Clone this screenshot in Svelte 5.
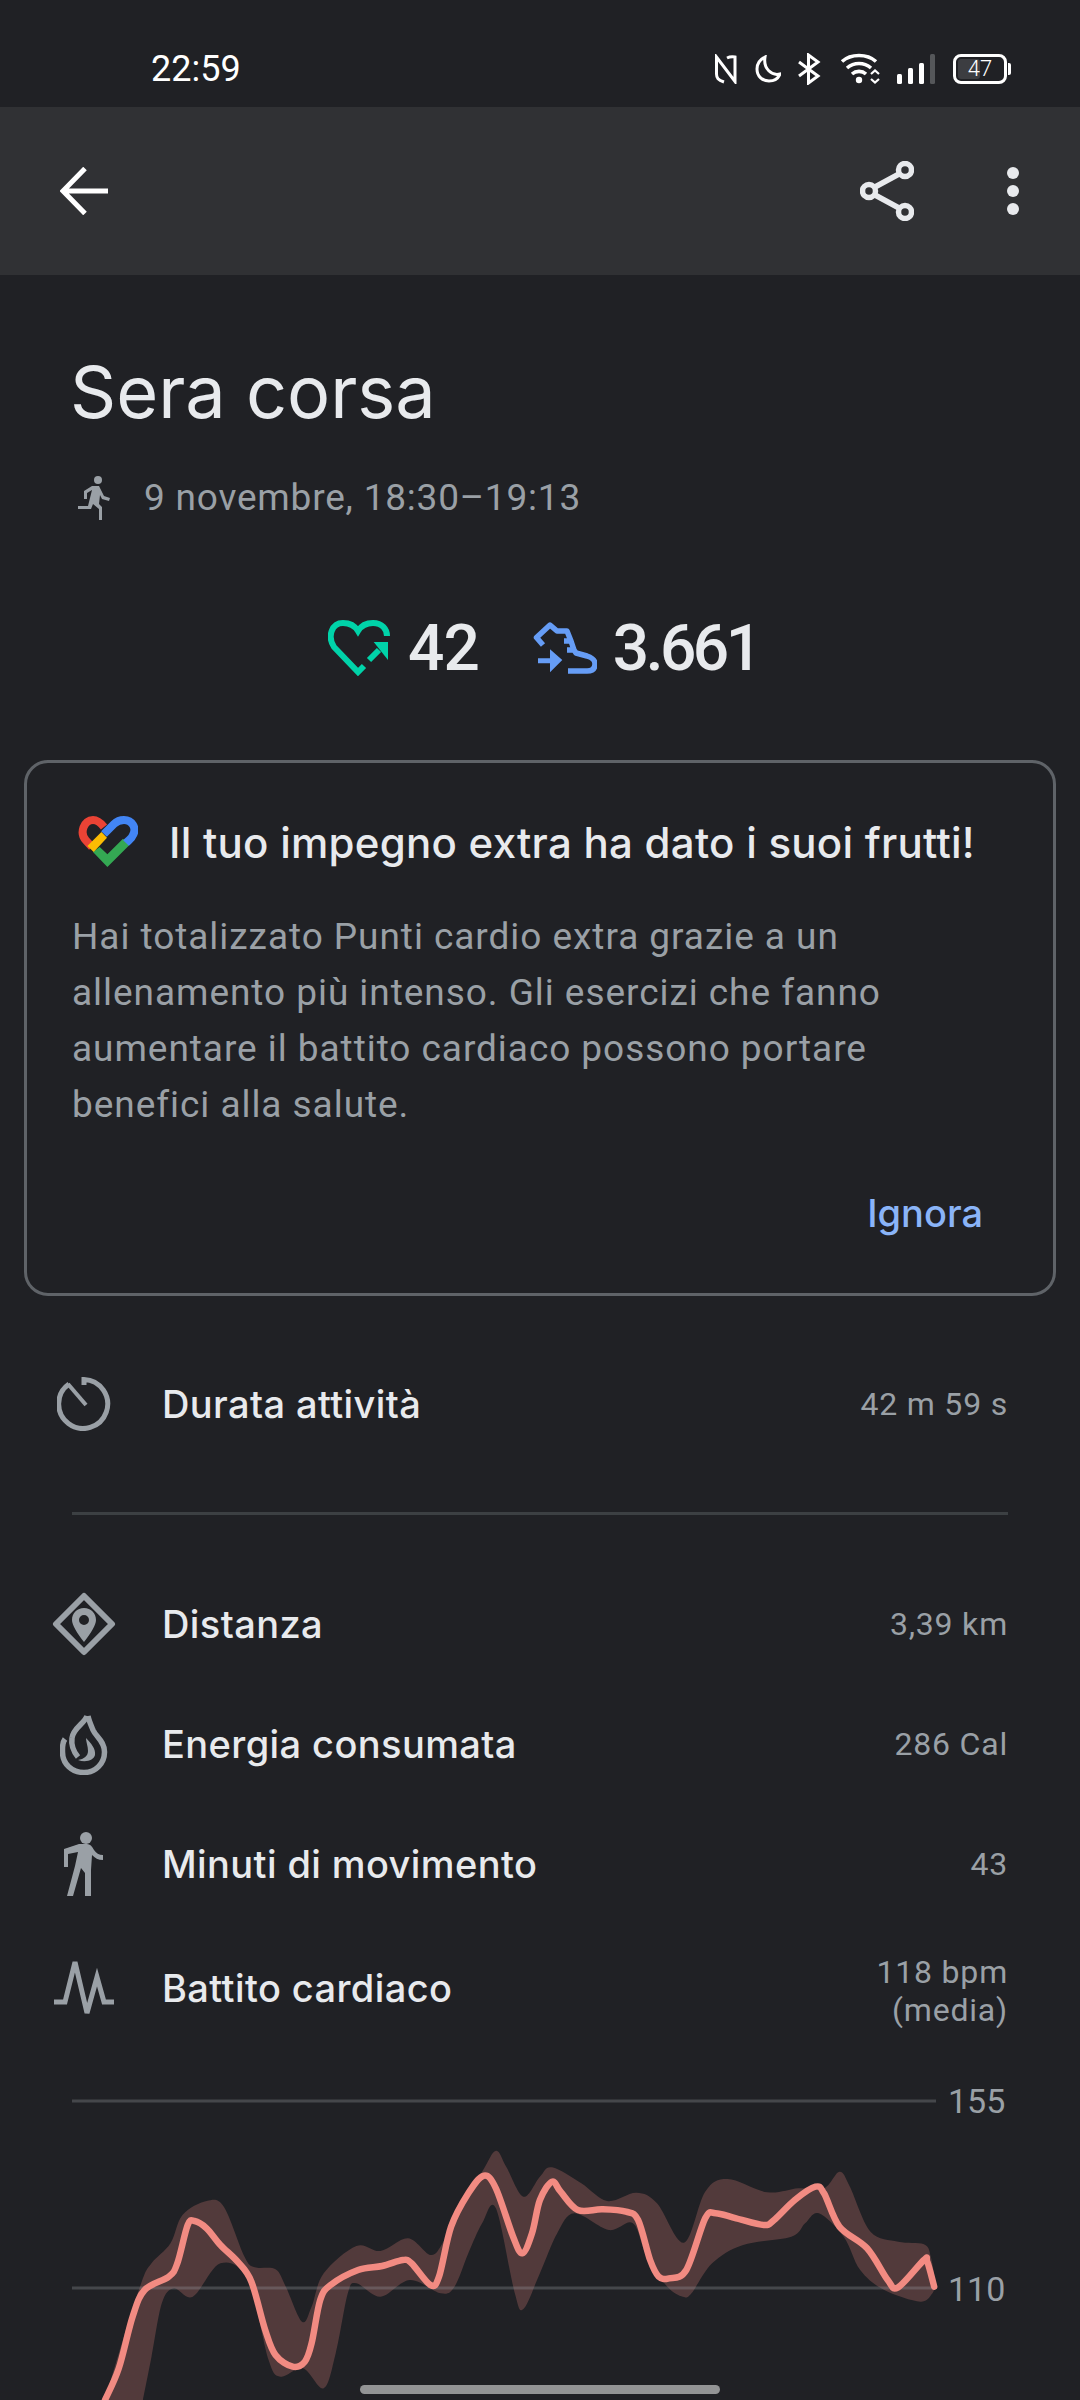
<script>
  // chart points are read off the reference: x in 1/2.904 px, y in 1/3 px, from y=2060
  const topLine = [[305,1020],[345,925],[385,770],[420,690],[490,650],[515,610],[545,495],[565,483],[600,505],[640,555],[690,605],[730,665],[770,810],[800,885],[850,920],[885,905],[905,850],[930,720],[960,675],[1040,630],[1110,618],[1170,600],[1195,610],[1250,675],[1275,650],[1310,500],[1360,400],[1405,347],[1440,385],[1490,530],[1517,580],[1545,520],[1568,420],[1603,365],[1628,395],[1678,450],[1748,448],[1818,455],[1853,480],[1888,600],[1913,650],[1943,655],[1993,630],[2048,475],[2078,460],[2138,475],[2218,495],[2248,480],[2308,420],[2368,380],[2393,400],[2438,500],[2518,565],[2578,660],[2608,682],[2683,600],[2693,605],[2713,680]];
  const bandTop = [[305,1020],[345,880],[410,670],[440,610],[495,550],[530,465],[600,423],[650,440],[710,590],[740,622],[800,628],[830,680],[877,785],[905,740],[940,640],[1035,558],[1105,573],[1185,535],[1250,585],[1285,550],[1320,470],[1400,335],[1440,272],[1470,320],[1520,410],[1568,350],[1603,322],[1688,370],[1763,423],[1848,398],[1908,430],[1986,548],[2048,395],[2113,357],[2228,397],[2318,385],[2393,385],[2438,335],[2468,380],[2528,515],[2608,545],[2683,553],[2703,590],[2718,680]];
  const bandBottom = [[2708,700],[2673,725],[2568,690],[2498,630],[2450,530],[2378,460],[2338,490],[2298,530],[2158,555],[2068,610],[2008,700],[1983,710],[1938,680],[1878,590],[1838,490],[1768,510],[1668,460],[1618,520],[1568,640],[1520,747],[1495,700],[1440,445],[1400,490],[1360,580],[1320,680],[1280,700],[1190,660],[1105,710],[1035,670],[1010,700],[975,880],[940,985],[880,925],[815,950],[780,900],[720,660],[640,610],[560,710],[505,685],[470,730],[440,890],[415,1020]];

  const toPx = (pts) => pts.map(([x, y]) => [x / 2.904, y / 3]);

  // catmull-rom through the points, as cubic segments
  function smooth(pts, start = true) {
    let d = start ? `M${pts[0][0].toFixed(1)} ${pts[0][1].toFixed(1)}` : `L${pts[0][0].toFixed(1)} ${pts[0][1].toFixed(1)}`;
    for (let i = 0; i < pts.length - 1; i++) {
      const p0 = pts[i - 1] || pts[i];
      const p1 = pts[i];
      const p2 = pts[i + 1];
      const p3 = pts[i + 2] || p2;
      const c1x = p1[0] + (p2[0] - p0[0]) / 6;
      const c1y = p1[1] + (p2[1] - p0[1]) / 6;
      const c2x = p2[0] - (p3[0] - p1[0]) / 6;
      const c2y = p2[1] - (p3[1] - p1[1]) / 6;
      d += `C${c1x.toFixed(1)} ${c1y.toFixed(1)} ${c2x.toFixed(1)} ${c2y.toFixed(1)} ${p2[0].toFixed(1)} ${p2[1].toFixed(1)}`;
    }
    return d;
  }

  const linePath = smooth(toPx(topLine));
  const bandPath = smooth(toPx(bandTop)) + smooth(toPx(bandBottom), false) + "Z";

  const paragraph = [
    "Hai totalizzato Punti cardio extra grazie a un",
    "allenamento più intenso. Gli esercizi che fanno",
    "aumentare il battito cardiaco possono portare",
    "benefici alla salute.",
  ];
</script>

<div class="page">
  <header class="status">
    <span class="time">22:59</span>
    <div class="status-icons">
      <svg width="24" height="30" viewBox="0 0 24 30" fill="none" stroke="#fff" stroke-width="3">
        <path d="M10 28C4 26 2.500 24 2.500 20V3L21 27.500V3C18 2.500 15 3 13 4" />
      </svg>
      <svg class="gap-moon" width="26" height="28" viewBox="0 0 26 28" fill="none" stroke="#fff" stroke-width="3">
        <path d="M10 2C4 5 2 9 2 14C2 21 7 26 14 26C19 26 23 24 25 19C17 21 8 14 10 2Z" />
      </svg>
      <svg class="gap-bt" width="24" height="32" viewBox="0 0 24 32" fill="none" stroke="#fff" stroke-width="3">
        <path d="M2 9L21 23L11.500 30V2L21 9L2 23" />
      </svg>
      <svg class="gap-wifi" width="42" height="32" viewBox="0 0 42 32">
        <path d="M2 8.500C11 .5 27 .5 36 8.500M7 15C14 9 24 9 31 15M12 21C16 17.500 22 17.500 26 21" fill="none" stroke="#fff" stroke-width="3.600" />
        <circle cx="19" cy="27" r="3.200" fill="#fff" />
        <path d="M31 21L35 17.500L39 21M31 26L35 29.500L39 26" fill="none" stroke="#fff" stroke-width="2.200" />
      </svg>
      <svg class="gap-signal" width="38" height="30" viewBox="0 0 38 30">
        <rect x="0" y="20" width="5" height="10" rx="1.500" fill="#fff" />
        <rect x="11" y="14" width="5" height="16" rx="1.500" fill="#fff" />
        <rect x="22" y="9" width="5" height="21" rx="1.500" fill="#fff" />
        <rect x="33" y="0" width="5" height="30" rx="1.500" fill="#55575a" />
      </svg>
      <div class="battery">
        <div class="battery-body"><span class="battery-fill"></span><span class="battery-num">47</span></div>
        <span class="battery-tip"></span>
      </div>
    </div>
  </header>

  <div class="toolbar">
    <svg width="48" height="48" viewBox="0 0 48 48" fill="none" stroke="#fff" stroke-width="5">
      <path d="M25 1.500L3 24L25 46.500M3 24H48" />
    </svg>
    <div class="toolbar-right">
      <svg width="54" height="60" viewBox="0 0 54 60" fill="none" stroke="#e8eaed" stroke-width="5.500">
        <circle cx="9" cy="30" r="6.500" />
        <circle cx="45" cy="9" r="6.500" />
        <circle cx="45" cy="51" r="6.500" />
        <path d="M15 26L39 13M15 34L39 47" />
      </svg>
      <svg width="14" height="48" viewBox="0 0 14 48" fill="#e8eaed">
        <circle cx="7" cy="6" r="6" />
        <circle cx="7" cy="24" r="6" />
        <circle cx="7" cy="42" r="6" />
      </svg>
    </div>
  </div>

  <section class="heading">
    <h1>Sera corsa</h1>
    <div class="when">
      <svg width="32" height="44" viewBox="0 0 32 44" fill="#9aa0a6">
        <circle cx="20" cy="4" r="4" />
        <path d="M14 10L21 10L26 20L32 22L31 25L24 23L22 19L21 28L24 31V44H21V33L15 28L13 33H0V30H10L14 14L9 17V23H6V15Z" />
      </svg>
      <span>9 novembre, 18:30–19:13</span>
    </div>
  </section>

  <div class="stats">
    <svg width="62" height="56" viewBox="0 0 62 56" fill="none" stroke="#00d3a9" stroke-width="6">
      <path d="M36 46L30 52L6 27C-1 16 4 3 15 3C22 3 27 6 30 11C33 6 38 3 45 3C54 3 59 9 59 16" />
      <path d="M41 40L51 30" />
      <path d="M45.700 22H60V40Z" fill="#00d3a9" stroke="none" />
    </svg>
    <span class="stat-num first">42</span>
    <svg class="shoe" width="64" height="52" viewBox="0 0 64 52" fill="none" stroke="#669df6" stroke-width="5.500" stroke-linejoin="round">
      <path d="M10 23L3.500 15.500L17 3L24 9H34L38 19H31M38 19L41 28H34M41 28L43 31L54 34C60 36 62 38 62 42C62 47 59 49 54 49H35" />
      <path d="M5 36.300H17V27.300L29.300 38L17 50.300V41.300H5Z" fill="#669df6" stroke="none" />
    </svg>
    <span class="stat-num second">3.661</span>
  </div>

  <div class="card">
    <div class="card-title">
      <svg width="60" height="54" viewBox="0 0 60 54" fill="none" stroke-width="8">
        <path d="M14 31L8 24.500C1 17 6 4 15 4C19 4 22 6 26 11" stroke="#ea4335" />
        <path d="M15 36L29.400 51L51.700 28.700L45 22.700L29.400 38.300L21.700 31Z" fill="#34a853" stroke="none" />
        <path d="M26 18L36 8C40 4 44 4 46 4C54 4 59 12 55 19C54 22 52 23 48 27" stroke="#4285f4" />
        <path d="M9.400 30L23.400 16L29 21.700L15.700 36Z" fill="#fbbc04" stroke="none" />
      </svg>
      <span>Il tuo impegno extra ha dato i suoi frutti!</span>
    </div>
    <p class="card-text">
      {#each paragraph as line}
        <span>{line}</span>
      {/each}
    </p>
    <div class="card-action">Ignora</div>
  </div>

  <div class="rows">
    <div class="row first-row">
      <div class="row-icon">
        <svg width="54" height="54" viewBox="0 0 54 54" fill="none" stroke="#9aa0a6" stroke-width="5">
          <path d="M12 7A24.500 24.500 0 1 0 27 2.500V8" />
          <path d="M11 7L29 28" stroke-width="4" />
        </svg>
      </div>
      <span class="row-label">Durata attività</span>
      <span class="row-value">42 m 59 s</span>
    </div>
    <div class="divider"></div>
    <div class="row dist">
      <div class="row-icon">
        <svg width="64" height="64" viewBox="0 0 64 64">
          <path d="M32 4L60 32L32 60L4 32Z" fill="none" stroke="#9aa0a6" stroke-width="6" stroke-linejoin="round" />
          <path fill-rule="evenodd" d="M32 16C25 16 20 21 20 28C20 33 25 41 32 50C39 41 44 33 44 28C44 21 39 16 32 16ZM32 23A5 5 0 1 1 32 33A5 5 0 1 1 32 23Z" fill="#9aa0a6" />
        </svg>
      </div>
      <span class="row-label">Distanza</span>
      <span class="row-value">3,39 km</span>
    </div>
    <div class="row">
      <div class="row-icon">
        <svg width="48" height="62" viewBox="0 0 48 62" fill="none" stroke="#9aa0a6" stroke-width="5.500">
          <path d="M27 3C25 10 13 15 12 25C11 32 13 38 18 44" />
          <path d="M5 26C2 30 2.500 34 2.500 39C2.500 51 12 59.500 24 59.500C36 59.500 44.500 50 44.500 39C44.500 28 36 24 33 17C31 12 29 8 28 3" />
          <path d="M26 25C31 30 36 36 35 42C34 47 26 50 18 47C24 46 28 43 28 38C28 33 26 29 26 25Z" fill="#9aa0a6" stroke="none" />
        </svg>
      </div>
      <span class="row-label">Energia consumata</span>
      <span class="row-value">286 Cal</span>
    </div>
    <div class="row">
      <div class="row-icon">
        <svg width="40" height="64" viewBox="0 0 40 64" fill="#9aa0a6">
          <circle cx="22" cy="6" r="6" />
          <path d="M0 17L15 12H23C26 12 28 14 30 18C32 21 35 23 39 23V28C34 28 31 26 28 23L27 38V64H21V41L17 36L9 64H3L11 34L14 20L4 22V35H0Z" />
        </svg>
      </div>
      <span class="row-label">Minuti di movimento</span>
      <span class="row-value">43</span>
    </div>
    <div class="row tall">
      <div class="row-icon">
        <svg width="60" height="58" viewBox="0 0 60 58" fill="none" stroke="#9aa0a6" stroke-width="5">
          <path d="M0 43H11L21 3L33 54L43 18L50 43H60" />
        </svg>
      </div>
      <span class="row-label">Battito cardiaco</span>
      <span class="row-value">118 bpm<br />(media)</span>
    </div>
  </div>

  <svg class="chart" width="1080" height="340" viewBox="0 0 1080 340">
    <path d={bandPath} fill="#f28b82" fill-opacity="0.24" />
    <path d="M72 41H936M72 228H936" stroke="#9aa0a6" stroke-opacity="0.3" stroke-width="3" />
    <path d={linePath} fill="none" stroke="#f28b82" stroke-width="6.500" stroke-linecap="round" stroke-linejoin="round" />
    <text x="948" y="53">155</text>
    <text x="948" y="241">110</text>
  </svg>

  <div class="home-pill"></div>
</div>

<style>
  :global(body) {
    background: #202125;
  }
  .page {
    position: relative;
    width: 1080px;
    height: 2400px;
    overflow: hidden;
    background: #202125;
    font-family: Roboto, sans-serif;
    color: #e8eaed;
  }
  svg {
    flex: none;
  }
  .status {
    height: 107px;
    box-sizing: border-box;
    padding: 30px 69px 0 151px;
    display: flex;
    align-items: center;
    justify-content: space-between;
  }
  .time {
    font-size: 36px;
    color: #fff;
  }
  .status-icons {
    display: flex;
    align-items: center;
  }
  .gap-moon {
    margin-left: 17px;
  }
  .gap-bt {
    margin-left: 16px;
  }
  .gap-wifi {
    margin-left: 19px;
  }
  .gap-signal {
    margin-left: 15px;
  }
  .battery {
    display: flex;
    align-items: center;
    margin-left: 18px;
    gap: 1px;
  }
  .battery-body {
    position: relative;
    width: 54px;
    height: 30px;
    box-sizing: border-box;
    border: 3px solid #fff;
    border-radius: 8px;
    display: flex;
    align-items: center;
    justify-content: center;
  }
  .battery-fill {
    position: absolute;
    left: 2px;
    top: 2px;
    bottom: 2px;
    width: 22px;
    border-radius: 3px;
    background: #3c3d41;
  }
  .battery-num {
    position: relative;
    font-size: 22px;
    font-weight: 300;
    color: #fff;
  }
  .battery-tip {
    width: 3px;
    height: 12px;
    background: #fff;
    border-radius: 0 2px 2px 0;
  }
  .toolbar {
    height: 168px;
    box-sizing: border-box;
    padding: 0 60px;
    background: #303134;
    display: flex;
    align-items: center;
    justify-content: space-between;
  }
  .toolbar-right {
    display: flex;
    align-items: center;
    gap: 92px;
  }
  .heading {
    padding: 72px 70px 0;
  }
  h1 {
    margin: 0;
    font-family: Inter, sans-serif;
    font-weight: 400;
    font-size: 72px;
    line-height: 90px;
    color: #e8eaed;
  }
  .when {
    margin-top: 37px;
    display: flex;
    align-items: center;
    gap: 34px;
    margin-left: 8px;
    font-size: 37px;
    line-height: 48px;
    color: #9aa0a6;
  }
  .when span {
    letter-spacing: 0.8px;
  }
  .stats {
    margin-top: 96px;
    padding-left: 328px;
    display: flex;
    align-items: center;
    height: 60px;
  }
  .stat-num {
    font-family: Roboto, sans-serif;
    font-size: 64px;
    font-weight: 500;
    letter-spacing: -1px;
    margin-left: 18px;
    color: #e8eaed;
  }
  .stat-num.first {
    margin-right: 54px;
  }
  .stat-num.second {
    letter-spacing: -3.5px;
    margin-left: 16px;
  }
  .card {
    margin: 82px 24px 0;
    height: 536px;
    box-sizing: border-box;
    border: 3px solid #5f6368;
    border-radius: 24px;
    padding: 50px 45px 0;
  }
  .card-title {
    display: flex;
    align-items: center;
    gap: 31px;
    margin-left: 6px;
    font-family: Inter, sans-serif;
    font-size: 42px;
    font-weight: 500;
    letter-spacing: 0.26px;
    line-height: 60px;
  }
  .card-text {
    margin: 36px 0 0;
    font-size: 37px;
    line-height: 56px;
    letter-spacing: 0.95px;
    color: #9aa0a6;
  }
  .card-text span {
    display: block;
    white-space: nowrap;
  }
  .card-action {
    margin-top: 57px;
    text-align: right;
    padding-right: 25px;
    font-family: Inter, sans-serif;
    font-size: 38px;
    font-weight: 500;
    color: #8ab4f8;
  }
  .rows {
    padding: 0 72px;
  }
  .row {
    display: flex;
    align-items: center;
    height: 120px;
  }
  .first-row {
    margin-top: 48px;
  }
  .dist {
    margin-top: 49px;
  }
  .tall {
    height: 128px;
  }
  .tall .row-value {
    margin-top: 6px;
  }
  .row-icon {
    width: 24px;
    flex: none;
    display: flex;
    justify-content: center;
    margin-right: 66px;
  }
  .row-label {
    flex: 1;
    font-family: Inter, sans-serif;
    font-size: 38px;
    font-weight: 500;
    letter-spacing: 0.4px;
    color: #e8eaed;
  }
  .row-value {
    text-align: right;
    font-size: 32px;
    line-height: 38px;
    letter-spacing: 0.8px;
    color: #9aa0a6;
  }
  .divider {
    margin-top: 48px;
    height: 3px;
    background: #3c4043;
  }
  .chart {
    position: absolute;
    left: 0;
    top: 2060px;
  }
  .chart text {
    font-family: Roboto, sans-serif;
    font-size: 34px;
    fill: #9aa0a6;
  }
  .home-pill {
    position: absolute;
    left: 360px;
    top: 2385px;
    width: 360px;
    height: 9px;
    border-radius: 5px;
    background: #939495;
  }
</style>
